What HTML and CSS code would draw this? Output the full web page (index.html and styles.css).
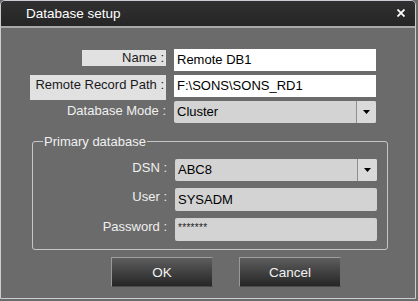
FILE: index.html
```html
<!DOCTYPE html>
<html lang="en">
<head>
    <meta charset="UTF-8">
    <title>Database setup</title>
    <link rel="stylesheet" href="styles.css">
</head>
<body>
    <div class="window">
        <div class="titlebar">
            <span class="title">Database setup</span>
            <span class="close">
                <svg width="8" height="8" viewBox="0 0 8 8"><path d="M0.5 0.5 L7.5 7.5 M7.5 0.5 L0.5 7.5" stroke="#fff" stroke-width="1.8" fill="none"/></svg>
            </span>
        </div>

        <form class="content">
            <div class="rows">
                <label class="cap"><span class="tag tag-name">Name :</span></label>
                <input class="field white" type="text" value="Remote DB1">

                <label class="cap"><span class="tag tag-path">Remote Record Path :</span></label>
                <input class="field white" type="text" value="F:\SONS\SONS_RD1">

                <label class="cap">Database Mode :</label>
                <div class="combo">
                    <span class="combo-value">Cluster</span>
                    <span class="drop"><svg width="7" height="4" viewBox="0 0 7 4"><path d="M0 0 H7 L3.5 4 Z" fill="#000"/></svg></span>
                </div>
            </div>

            <fieldset class="group">
                <legend>Primary database</legend>
                <div class="rows inner">
                    <label class="cap">DSN :</label>
                    <div class="combo">
                        <span class="combo-value">ABC8</span>
                        <span class="drop"><svg width="7" height="4" viewBox="0 0 7 4"><path d="M0 0 H7 L3.5 4 Z" fill="#000"/></svg></span>
                    </div>

                    <label class="cap">User :</label>
                    <input class="field" type="text" value="SYSADM">

                    <label class="cap">Password :</label>
                    <input class="field secret" type="text" value="*******">
                </div>
            </fieldset>

            <div class="actions">
                <button type="button">OK</button>
                <button type="button">Cancel</button>
            </div>
        </form>
    </div>
</body>
</html>
```

FILE: styles.css
```css
body {
    margin: 0;
    background: #6b6b6b;
    font-family: "Liberation Sans", Arial, sans-serif;
    font-size: 13px;
}
.window {
    width: 416px;
    height: 299px;
    box-sizing: border-box;
    border: 1px solid #c9ccd3;
    border-radius: 5px 5px 0 0;
    background: #6b6b6b;
    overflow: hidden;
}
.titlebar {
    display: flex;
    justify-content: space-between;
    align-items: center;
    height: 27px;
    box-sizing: border-box;
    padding: 0 10px 1px 25px;
    background: linear-gradient(#303030, #262626);
    border-bottom: 2px solid #a9a9a9;
}
.title {
    color: #fff;
    font-size: 13.5px;
}
.close {
    display: flex;
}
.content {
    padding-top: 21px;
}
.rows {
    display: grid;
    grid-template-columns: 166px 202px;
    grid-auto-rows: 22px;
    column-gap: 7px;
    row-gap: 4px;
}
.cap {
    justify-self: end;
    align-self: start;
    padding-right: 1px;
    color: #f0f0f0;
    line-height: 19px;
    white-space: nowrap;
}
.tag {
    display: block;
    box-sizing: border-box;
    padding: 0 2px 0 4px;
    background: #e1e1e1;
    color: #1a1a1a;
    text-align: right;
}
.tag-name {
    width: 84px;
    height: 16px;
    line-height: 16px;
    margin-top: 1px;
}
.tag-path {
    width: 136px;
    height: 25px;
    line-height: 16px;
    padding-top: 2px;
}
.field {
    box-sizing: border-box;
    width: 100%;
    height: 100%;
    margin: 0;
    padding: 0 3px 1px;
    border: none;
    border-radius: 2px;
    background: #d3d3d3;
    color: #000;
    font-family: inherit;
    font-size: 13px;
    outline: none;
}
.field.white {
    background: #fff;
    border-radius: 0;
}
.field.secret {
    font-size: 10px;
    padding: 3px 3px 8px;
    letter-spacing: 0.3px;
    color: #222;
}
.combo {
    display: flex;
    background: #d3d3d3;
    border-radius: 2px;
    color: #000;
}
.combo-value {
    flex: 1;
    padding-left: 3px;
    line-height: 22px;
}
.drop {
    width: 19px;
    display: flex;
    align-items: center;
    justify-content: center;
    border-left: 1px solid #8f8f8f;
    background: #dadada;
    border-radius: 0 2px 2px 0;
}
.group {
    width: 356px;
    box-sizing: border-box;
    margin: 11px 0 0 31px;
    padding: 10px 10px 8px 0;
    border: 1px solid #c6c6c6;
    border-radius: 3px;
}
.group legend {
    margin-left: 10px;
    padding: 0 1px;
    color: #f0f0f0;
    line-height: 15px;
}
.inner {
    grid-template-columns: 135px 202px;
    grid-template-rows: 22px 23px 23px;
    row-gap: 7px;
}
.inner .cap {
    line-height: 17px;
}
.actions {
    display: flex;
    gap: 26px;
    padding: 7px 0 0 110px;
}
.actions button {
    width: 102px;
    height: 30px;
    border: 1px solid;
    border-color: #9e9e9e #6a6a6a #4a4a4a #9a9a9a;
    background: linear-gradient(#5d5d5d, #262626);
    color: #f2f2f2;
    font-family: inherit;
    font-size: 13.5px;
    padding: 0;
}
```
